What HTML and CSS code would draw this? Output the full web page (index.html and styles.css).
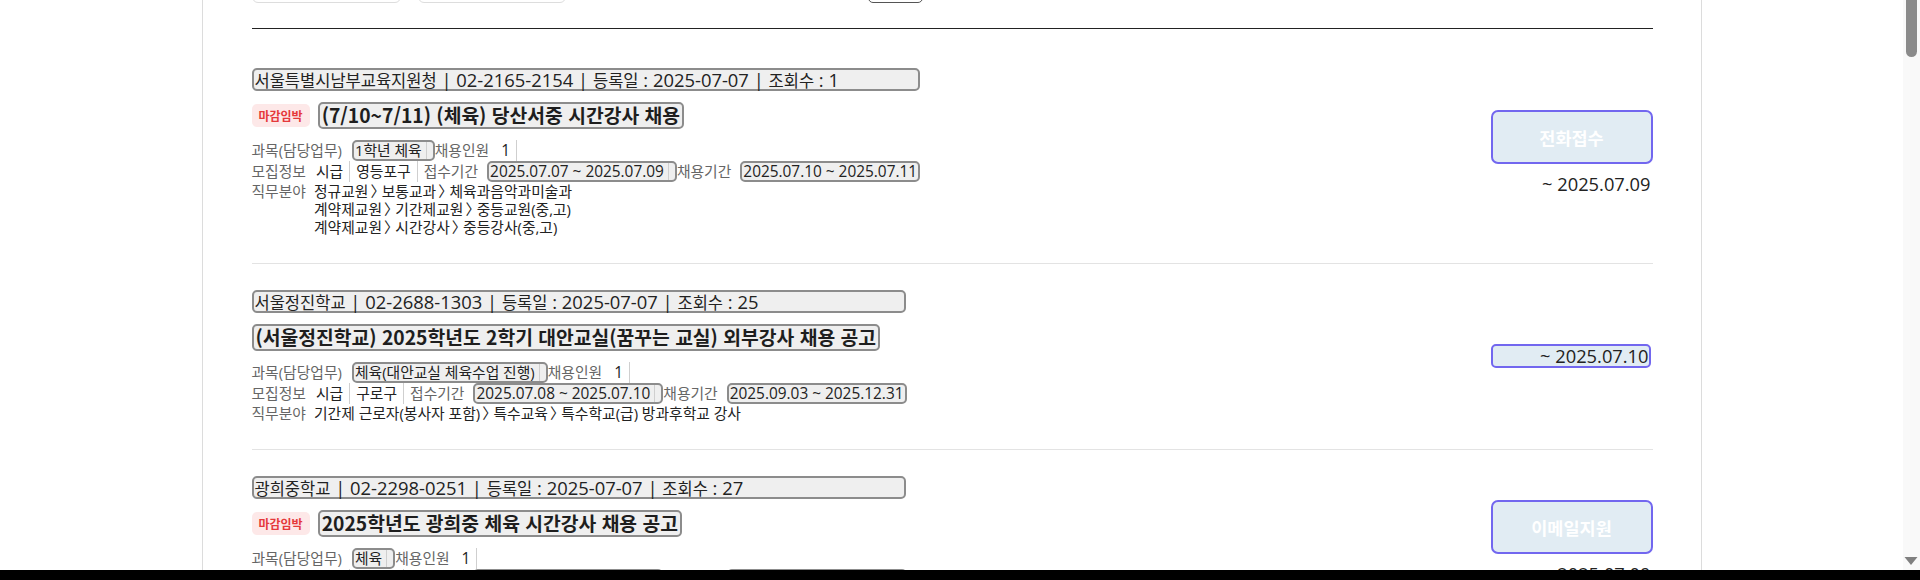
FILE: index.html
```html
<!DOCTYPE html>
<html lang="ko">
<head>
<meta charset="utf-8">
<title>채용공고 목록</title>
<link rel="stylesheet" href="styles.css">
</head>
<body>
<div class="screen">
  <main class="page">
    <div class="wrap">
      <div class="filters">
        <span class="fbox"></span>
        <span class="fbox fbox--second"></span>
        <span class="fbtn"></span>
      </div>
      <ul class="list">
        <li class="item">
          <div class="info">
            <span class="meta meta--long"><span class="ko">서울특별시남부교육지원청</span> | 02-2165-2154 | <span class="ko">등록일</span> : 2025-07-07 | <span class="ko">조회수</span> : 1</span>
            <div class="title-row">
              <span class="badge">마감임박</span>
              <span class="title">(7/10~7/11) (체육) 당산서중 시간강사 채용</span>
            </div>
            <div class="fields">
              <div class="row">
                <span class="lbl">과목(담당업무)</span>
                <span class="box"><span class="in">1학년 체육</span></span>
                <span class="flbl">채용인원</span>
                <span class="val num">1</span>
              </div>
              <div class="row">
                <span class="lbl">모집정보</span>
                <span class="val">시급</span>
                <span class="val">영등포구</span>
                <span class="flbl">접수기간</span>
                <span class="box num"><span class="in">2025.07.07 ~ 2025.07.09</span></span>
                <span class="flbl">채용기간</span>
                <span class="box box--end num"><span class="in">2025.07.10 ~ 2025.07.11</span></span>
              </div>
              <div class="row row--multi">
                <span class="lbl">직무분야</span>
                <div class="paths">
                  <div>정규교원<span class="sep">〉</span>보통교과<span class="sep">〉</span>체육과음악과미술과</div>
                  <div>계약제교원<span class="sep">〉</span>기간제교원<span class="sep">〉</span>중등교원(중,고)</div>
                  <div>계약제교원<span class="sep">〉</span>시간강사<span class="sep">〉</span>중등강사(중,고)</div>
                </div>
              </div>
            </div>
          </div>
          <div class="side">
            <span class="apply">전화접수</span>
            <span class="date">~ 2025.07.09</span>
          </div>
        </li>
        <li class="item">
          <div class="info">
            <span class="meta"><span class="ko">서울정진학교</span> | 02-2688-1303 | <span class="ko">등록일</span> : 2025-07-07 | <span class="ko">조회수</span> : 25</span>
            <div class="title-row">
              <span class="title">(서울정진학교) 2025학년도 2학기 대안교실(꿈꾸는 교실) 외부강사 채용 공고</span>
            </div>
            <div class="fields">
              <div class="row">
                <span class="lbl">과목(담당업무)</span>
                <span class="box"><span class="in">체육(대안교실 체육수업 진행)</span></span>
                <span class="flbl">채용인원</span>
                <span class="val num">1</span>
              </div>
              <div class="row">
                <span class="lbl">모집정보</span>
                <span class="val">시급</span>
                <span class="val">구로구</span>
                <span class="flbl">접수기간</span>
                <span class="box num"><span class="in">2025.07.08 ~ 2025.07.10</span></span>
                <span class="flbl">채용기간</span>
                <span class="box box--end num"><span class="in">2025.09.03 ~ 2025.12.31</span></span>
              </div>
              <div class="row row--multi">
                <span class="lbl">직무분야</span>
                <div class="paths">
                  <div>기간제 근로자(봉사자 포함)<span class="sep">〉</span>특수교육<span class="sep">〉</span>특수학교(급) 방과후학교 강사</div>
                </div>
              </div>
            </div>
          </div>
          <div class="side">
            <span class="date date--boxed">~ 2025.07.10</span>
          </div>
        </li>
        <li class="item">
          <div class="info">
            <span class="meta"><span class="ko">광희중학교</span> | 02-2298-0251 | <span class="ko">등록일</span> : 2025-07-07 | <span class="ko">조회수</span> : 27</span>
            <div class="title-row">
              <span class="badge">마감임박</span>
              <span class="title">2025학년도 광희중 체육 시간강사 채용 공고</span>
            </div>
            <div class="fields">
              <div class="row">
                <span class="lbl">과목(담당업무)</span>
                <span class="box"><span class="in">체육</span></span>
                <span class="flbl">채용인원</span>
                <span class="val num">1</span>
              </div>
              <div class="row">
                <span class="lbl">모집정보</span>
                <span class="val">시급</span>
                <span class="val">성동구</span>
                <span class="flbl">접수기간</span>
                <span class="box num"><span class="in">2025.07.07 ~ 2025.07.09</span></span>
                <span class="flbl">채용기간</span>
                <span class="box box--end num"><span class="in">2025.07.10 ~ 2025.07.31</span></span>
              </div>
              <div class="row row--multi">
                <span class="lbl">직무분야</span>
                <div class="paths">
                  <div>계약제교원<span class="sep">〉</span>시간강사<span class="sep">〉</span>중등강사(중,고)</div>
                </div>
              </div>
            </div>
          </div>
          <div class="side">
            <span class="apply">이메일지원</span>
            <span class="date">~ 2025.07.09</span>
          </div>
        </li>
      </ul>
    </div>
  </main>
  <div class="sbar">
    <span class="thumb"></span>
    <svg class="arrow" width="17" height="17" viewBox="0 0 17 17"><polygon points="1.5,4 14.5,4 8,12" fill="#808080"/></svg>
  </div>
</div>
<div class="band"></div>
</body>
</html>
```

FILE: styles.css
```css
html, body {
  margin: 0;
  padding: 0;
}

body {
  background: #000;
  color: #222;
  font-family: "Open Sans", "Noto Sans CJK KR", sans-serif;
}

.screen {
  display: flex;
  height: 570px;
  background: #fff;
  overflow: hidden;
}

.page {
  flex: 1;
  min-width: 0;
  height: 100%;
  overflow: hidden;
}

.wrap {
  box-sizing: border-box;
  width: 1500px;
  margin: 0 auto;
  min-height: 100%;
  padding: 0 48px 0 49px;
  border-left: 1px solid #dcdcdc;
  border-right: 1px solid #dcdcdc;
}

/* search filter area (cut at top) */
.filters {
  display: flex;
  margin-top: -33px;
  padding-bottom: 25px;
  border-bottom: 1px solid #222;
  margin-bottom: 13px;
}

.fbox {
  box-sizing: border-box;
  width: 149px;
  height: 36px;
  border: 1px solid #dddddd;
  border-radius: 6px;
}

.fbox--second {
  width: 148px;
  margin-left: 17px;
}

.fbtn {
  box-sizing: border-box;
  width: 55px;
  height: 36px;
  margin-left: 302px;
  border: 1px solid #555;
  border-radius: 5px;
}

/* list */
.list {
  list-style: none;
  margin: 0;
  padding: 0;
}

.item {
  display: flex;
  align-items: center;
  padding: 26px 0 27px;
  border-bottom: 1px solid #e3e3e3;
}

.info {
  flex: 1;
  min-width: 0;
  display: flex;
  flex-direction: column;
  align-items: flex-start;
}

.meta {
  box-sizing: border-box;
  width: 654px;
  height: 23px;
  padding: 0 1px;
  font-size: 18.4px;
  line-height: 19px;
  white-space: nowrap;
  background: #efefef;
  border: 2px solid #8c8c8c;
  border-radius: 5px;
}

.meta--long {
  width: 668px;
}

.meta .ko {
  font-family: "Noto Sans CJK KR", sans-serif;
  font-size: 16.5px;
}

.title-row {
  display: flex;
  align-items: center;
  gap: 8px;
  margin-top: 11px;
}

.badge {
  height: 23px;
  padding: 0 7px;
  line-height: 23px;
  border-radius: 5px;
  background: #fde8e8;
  color: #e5393b;
  font-family: "Noto Sans CJK KR", sans-serif;
  font-size: 12px;
  font-weight: 700;
}

.title {
  box-sizing: border-box;
  height: 27px;
  padding: 0 2px;
  line-height: 23px;
  font-family: "Noto Sans CJK KR", sans-serif;
  font-size: 19.3px;
  font-weight: 700;
  color: #1e1e1e;
  white-space: nowrap;
  background: #efefef;
  border: 2px solid #8c8c8c;
  border-radius: 5px;
}

.fields {
  margin-top: 11px;
}

.row {
  display: flex;
  align-items: stretch;
  height: 21px;
  font-size: 14.8px;
  line-height: 17px;
  white-space: nowrap;
}

.row > span {
  display: flex;
  align-items: center;
}

.num {
  font-size: 15.4px;
}

.lbl {
  color: #666;
  margin-right: 10px;
}

.flbl {
  color: #666;
  margin-right: 9px;
}

.val + .flbl {
  margin-left: 6px;
}

.val {
  color: #222;
  padding: 0 6px 0 6px;
  border-right: 1px solid #cfcfcf;
}

.lbl + .val {
  padding-left: 0;
}

.flbl + .val {
  padding-left: 3px;
}

.box {
  box-sizing: border-box;
  padding: 0 6px 0 1px;
  background: #efefef;
  border: 2px solid #8c8c8c;
  border-radius: 5px;
  color: #222;
}

.box .in {
  align-self: stretch;
  display: flex;
  align-items: center;
  padding-right: 4px;
  border-right: 1px solid #cfcfcf;
}

.box--end {
  padding-right: 1px;
}

.box--end .in {
  padding-right: 0;
  border-right: 0;
}

.row--multi {
  height: auto;
  line-height: 18px;
  align-items: flex-start;
}

.row--multi > .lbl {
  display: block;
  margin-right: 8px;
}

.paths {
  color: #222;
}

.sep {
  font-family: "Noto Sans CJK KR", sans-serif;
  line-height: 0;
  padding-left: 2px;
  letter-spacing: -3.5px;
}

/* right column */
.side {
  flex: none;
  width: 162px;
  display: flex;
  flex-direction: column;
  align-items: flex-start;
  gap: 10px;
}

.apply {
  box-sizing: border-box;
  width: 162px;
  height: 54px;
  display: flex;
  align-items: center;
  justify-content: center;
  background: #e1ecf3;
  border: 2px solid #7267ef;
  border-radius: 7px;
  color: #fff;
  font-family: "Noto Sans CJK KR", sans-serif;
  font-size: 17.5px;
  font-weight: 700;
}

.date {
  box-sizing: border-box;
  width: 160px;
  text-align: right;
  font-size: 18.3px;
  line-height: 20px;
  color: #222;
  white-space: nowrap;
}

.date--boxed {
  height: 24px;
  background: #e1ecf3;
  border: 2px solid #7267ef;
  border-radius: 5px;
}

/* fake scrollbar */
.sbar {
  flex: none;
  width: 17px;
  background: #f9f9f9;
  display: flex;
  flex-direction: column;
  justify-content: space-between;
  align-items: center;
}

.thumb {
  width: 11px;
  height: 57px;
  background: #8b8b8b;
  border-radius: 0 0 6px 6px;
}

.arrow {
  display: block;
}

.band {
  height: 10px;
  background: #000;
}
```
